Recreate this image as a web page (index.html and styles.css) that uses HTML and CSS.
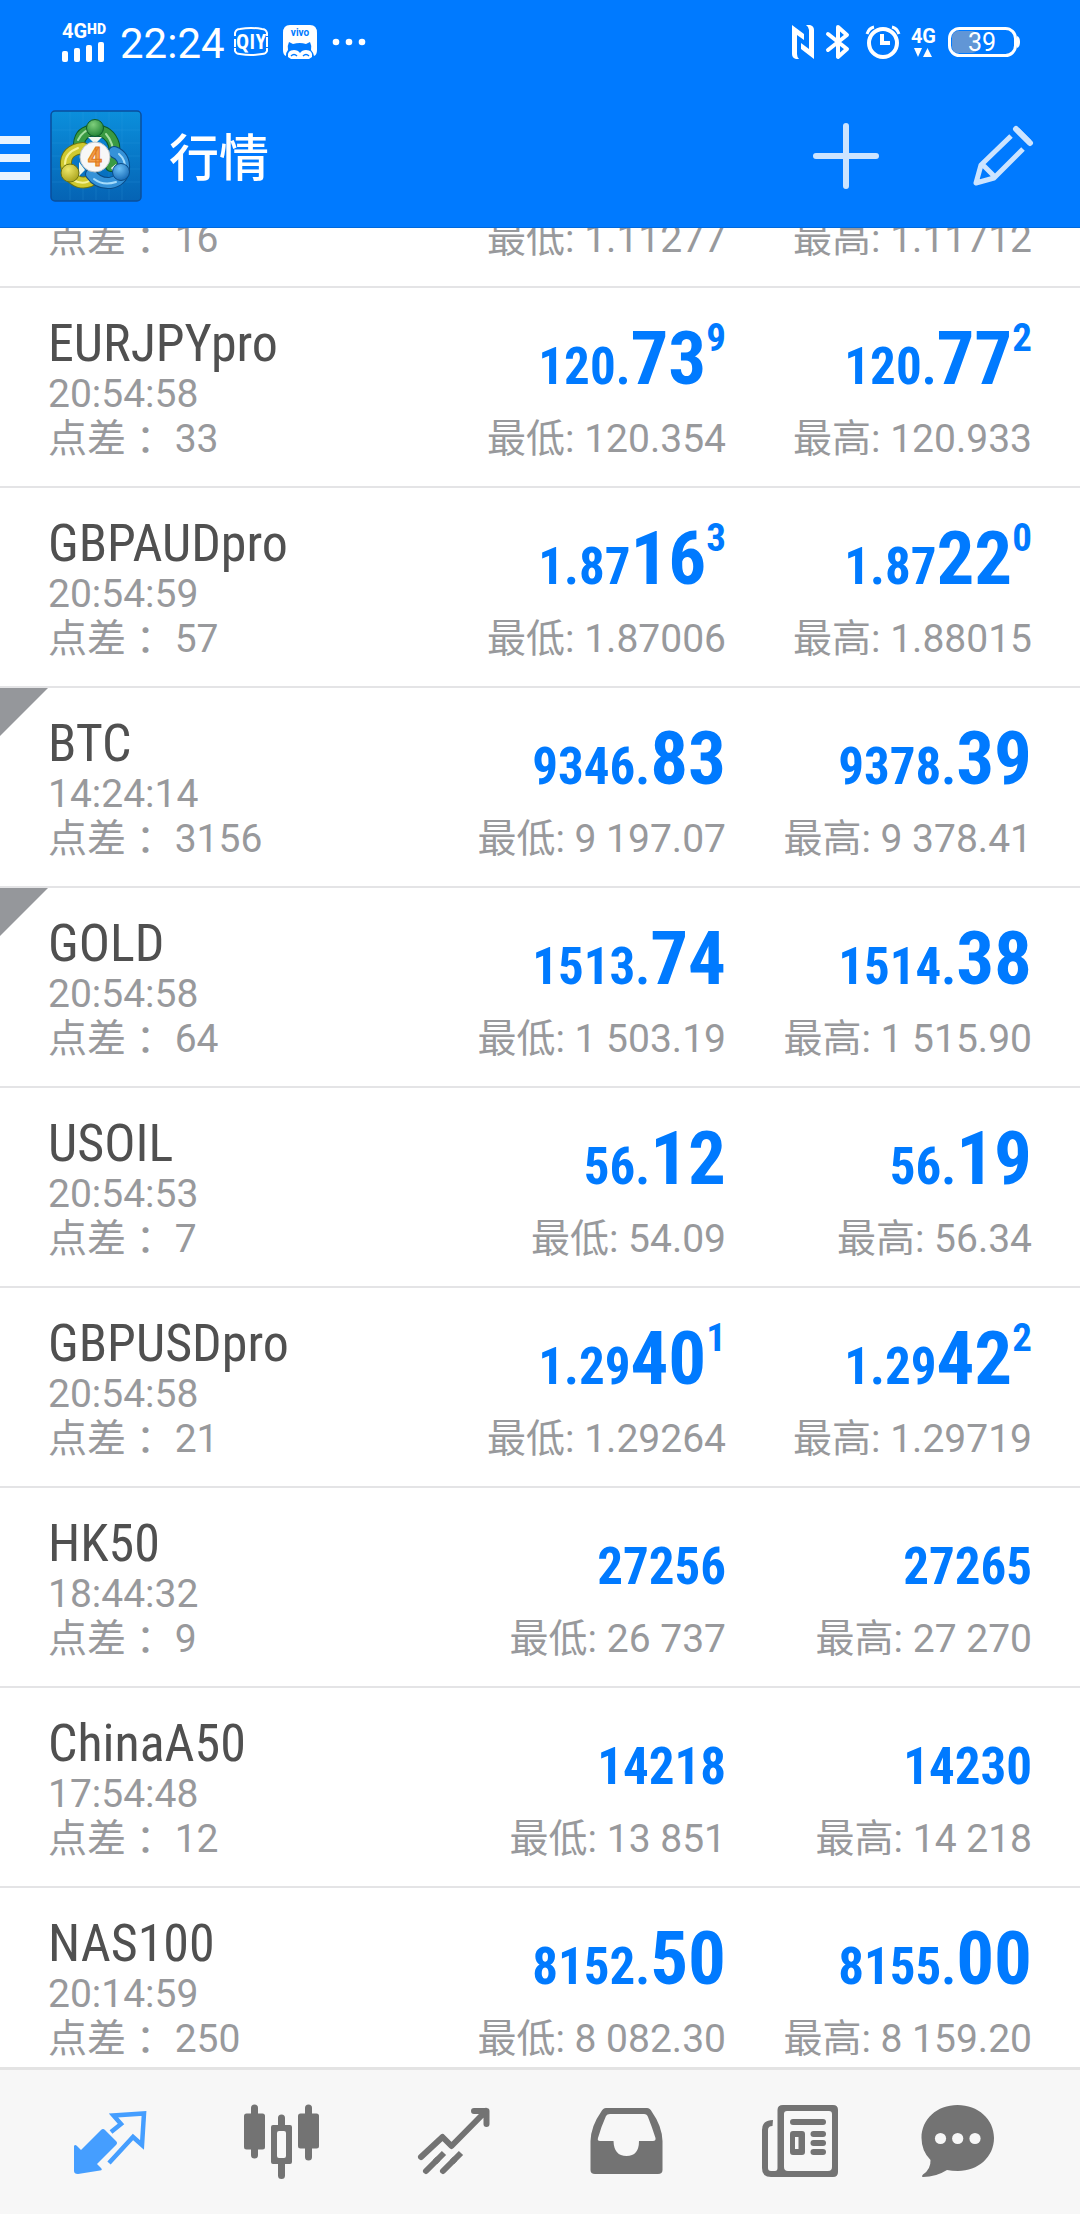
FILE: index.html
```html
<!DOCTYPE html>
<html lang="zh-CN">
<head>
<meta charset="utf-8">
<meta name="viewport" content="width=device-width, initial-scale=1">
<title>行情</title>
<link rel="stylesheet" href="styles.css">
</head>
<body>
<div class="app">
  <header class="header">
    <div class="status">
      <div class="signal">
        <span class="signal-label">4G<b class="hd">HD</b></span>
        <svg width="44" height="20" viewBox="0 0 44 20" fill="#fff" aria-hidden="true">
          <rect x="0" y="9" width="6" height="11" rx="2"/><rect x="12" y="6" width="6" height="14" rx="2"/><rect x="24" y="3" width="6" height="17" rx="2"/><rect x="36" y="0" width="6" height="20" rx="2"/>
        </svg>
      </div>
      <span class="clock">22:24</span>
      <svg class="app-note" width="34" height="30" viewBox="0 0 34 30" aria-hidden="true">
        <path d="M1 9V6Q2 2 6 2Q17 0 28 2Q32 2 33 6V9M1 21V24Q2 27 6 27Q17 29 28 27Q32 27 33 24V21M1 12V20M33 10V20" fill="none" stroke="#fff" stroke-width="2"/>
        <text x="17" y="22" text-anchor="middle" class="qiy">QIY</text>
      </svg>
      <svg class="app-note" width="34" height="34" viewBox="0 0 34 34" aria-hidden="true">
        <path d="M7 0H27Q34 0 34 8V25Q34 30 31 31Q30 27 28 25Q29 21 27 17L23 19Q17 17 10 19L6 17Q4 21 5 25Q3 27 3 31Q0 30 0 25V8Q0 0 7 0Z" fill="#fff"/>
        <path d="M5 32Q4 25 11 25Q15 25 17 28Q19 25 23 25Q30 25 29 32L26 34H8Z" fill="#fff"/>
        <path d="M8 31Q11 28 14 31M20 31Q23 28 26 31" fill="none" stroke="#007aff" stroke-width="1.4"/>
        <text x="17" y="11" text-anchor="middle" class="vivo">vivo</text>
      </svg>
      <svg class="dots" width="34" height="8" viewBox="0 0 34 8" fill="#fff" aria-hidden="true"><circle cx="4" cy="4" r="3.3"/><circle cx="17" cy="4" r="3.3"/><circle cx="30" cy="4" r="3.3"/></svg>
      <span class="spacer"></span>
      <svg class="nfc" width="22" height="34" viewBox="0 0 22 34" fill="#fff" aria-hidden="true">
        <path d="M0 0L12 9V15L5 10V29Q5 32 7 34H4Q0 33 0 29Z"/><path d="M22 34L9 24V18L17 24V5Q17 2 14 0H18Q22 1 22 5Z"/>
      </svg>
      <svg class="bt" width="24" height="36" viewBox="0 0 24 36" fill="none" stroke="#fff" stroke-width="4" stroke-linejoin="round" stroke-linecap="round" aria-hidden="true">
        <path d="M2 10L21 25L12 33V3L21 11L2 26"/>
      </svg>
      <svg class="alarm" width="36" height="34" viewBox="0 0 36 34" fill="none" stroke="#fff" stroke-width="4" aria-hidden="true">
        <circle cx="18" cy="18" r="14"/><path d="M17 9V18H25"/><path d="M2 9Q4 3 9 2M34 9Q32 3 27 2" stroke-width="3"/>
      </svg>
      <div class="data">
        <span class="data-label">4G</span>
        <svg width="18" height="9" viewBox="0 0 18 9" fill="#fff" aria-hidden="true"><path d="M0 0H8L4 9ZM9 9H18L13.500 0Z"/></svg>
      </div>
      <svg class="battery" width="74" height="30" viewBox="0 0 74 30" aria-hidden="true">
        <rect x="4" y="4" width="26" height="22" rx="6" fill="#6196d6"/>
        <rect x="1.500" y="1.500" width="66" height="27" rx="10" fill="none" stroke="#fff" stroke-width="3"/>
        <path d="M69 9Q72 10 72 15Q72 20 69 21Z" fill="#fff"/>
        <text x="34" y="24" text-anchor="middle" class="battery-text">39</text>
      </svg>
    </div>
    <div class="bar">
      <button class="menu" aria-label="菜单"><svg width="30" height="44" viewBox="0 0 30 44" fill="#e8f3ff"><path d="M0 0H30V8H0ZM0 18H30V26H0ZM0 36H30V44H0Z"/></svg></button>
      <svg class="logo" width="92" height="92" viewBox="0 0 92 92" aria-hidden="true">
        <defs>
          <linearGradient id="sky" x1="0" y1="0" x2="0" y2="1"><stop offset="0" stop-color="#0b8fdc"/><stop offset="1" stop-color="#0563b4"/></linearGradient>
          <radialGradient id="green" cx=".4" cy=".3" r=".8"><stop offset="0" stop-color="#7fce7c"/><stop offset="1" stop-color="#147a2b"/></radialGradient>
          <radialGradient id="gold" cx=".4" cy=".3" r=".8"><stop offset="0" stop-color="#eee86a"/><stop offset="1" stop-color="#a39b14"/></radialGradient>
          <radialGradient id="blue" cx=".4" cy=".3" r=".8"><stop offset="0" stop-color="#6dc0f5"/><stop offset="1" stop-color="#0d61b0"/></radialGradient>
        </defs>
        <rect x="1" y="1" width="90" height="90" rx="4" fill="url(#sky)" stroke="#0a4f9c" stroke-width="1.500"/>
        <path d="M20 2V90M33 2V90M46 2V90M59 2V90M72 2V90M2 20H90M2 33H90M2 46H90M2 59H90M2 72H90" stroke="#3aa5e8" stroke-width=".6" opacity=".35"/>
        <g fill="none" stroke-linecap="round">
          <path d="M29 34Q30 21 45 20Q60 21 64 35Q66 47 61 56" stroke="#0d5a28" stroke-width="12"/>
          <path d="M29 34Q30 21 45 20Q60 21 64 35Q66 47 61 56" stroke="#3a9a42" stroke-width="10"/>
          <path d="M28 30Q33 20 42 19M56 24Q64 33 63 46" stroke="#a4dfa1" stroke-width="2"/>
          <path d="M33 38Q15 40 16 55Q18 68 29 72Q38 74 45 68" stroke="#6c7310" stroke-width="12"/>
          <path d="M33 38Q15 40 16 55Q18 68 29 72Q38 74 45 68" stroke="#cfc92f" stroke-width="10"/>
          <path d="M28 38Q15 43 15 54M23 70Q34 76 42 69" stroke="#f5f193" stroke-width="2"/>
          <path d="M64 42Q75 46 74 60Q72 71 60 73Q48 74 41 64" stroke="#0a4b87" stroke-width="12"/>
          <path d="M64 42Q75 46 74 60Q72 71 60 73Q48 74 41 64" stroke="#3592d8" stroke-width="10"/>
          <path d="M69 44Q76 50 75 60M66 72Q53 76 44 69" stroke="#a5dcfb" stroke-width="2"/>
        </g>
        <path d="M38 27H52L45 34ZM29 52V66L35 60ZM61 58L66 54V66Z" fill="#eef7ee"/>
        <circle cx="45" cy="18" r="8.500" fill="url(#green)" stroke="#0d5a28"/>
        <circle cx="20" cy="63" r="9" fill="url(#gold)" stroke="#6c7310"/>
        <circle cx="71" cy="62" r="8.500" fill="url(#blue)" stroke="#0a4b87"/>
        <circle cx="45" cy="47" r="15" fill="#f7f7f7" stroke="#b9c4c9"/>
        <text x="45" y="56" text-anchor="middle" class="logo-text">4</text>
      </svg>
      <h1 class="title">行情</h1>
      <span class="spacer"></span>
      <button class="add" aria-label="添加"><svg width="66" height="66" viewBox="0 0 66 66" stroke="#cce4ff" stroke-width="6" stroke-linecap="round"><path d="M33 3V63M3 33H63"/></svg></button>
      <button class="edit" aria-label="编辑"><svg width="60" height="60" viewBox="0 0 60 60" fill="none" stroke="#cce4ff" stroke-width="5" stroke-linejoin="round"><path d="M38 10L8 39L3 57L21 52L50 23M9 38L22 51"/><path d="M43 3L57 17" stroke-width="6" stroke-linecap="round"/><path d="M46 2L58 14L55 18L41 4Z" fill="#cce4ff" stroke="none"/></svg></button>
    </div>
  </header>

  <main class="list">
    <section class="row row-partial">
      <div class="info"><span class="meta">点差 ：16</span></div>
      <div class="quote"><span class="meta">最低: 1.11277</span></div>
      <div class="quote"><span class="meta">最高: 1.11712</span></div>
    </section>
    <section class="row">
      <div class="info"><h2 class="name">EURJPYpro</h2><span class="meta">20:54:58</span><span class="meta">点差 ：33</span></div>
      <div class="quote"><span class="price"><span class="lead">120.</span>73<span class="pip">9</span></span><span class="meta">最低: 120.354</span></div>
      <div class="quote"><span class="price"><span class="lead">120.</span>77<span class="pip">2</span></span><span class="meta">最高: 120.933</span></div>
    </section>
    <section class="row">
      <div class="info"><h2 class="name">GBPAUDpro</h2><span class="meta">20:54:59</span><span class="meta">点差 ：57</span></div>
      <div class="quote"><span class="price"><span class="lead">1.87</span>16<span class="pip">3</span></span><span class="meta">最低: 1.87006</span></div>
      <div class="quote"><span class="price"><span class="lead">1.87</span>22<span class="pip">0</span></span><span class="meta">最高: 1.88015</span></div>
    </section>
    <section class="row flagged">
      <div class="info"><h2 class="name">BTC</h2><span class="meta">14:24:14</span><span class="meta">点差 ：3156</span></div>
      <div class="quote"><span class="price"><span class="lead">9346.</span>83</span><span class="meta">最低: 9 197.07</span></div>
      <div class="quote"><span class="price"><span class="lead">9378.</span>39</span><span class="meta">最高: 9 378.41</span></div>
    </section>
    <section class="row flagged">
      <div class="info"><h2 class="name">GOLD</h2><span class="meta">20:54:58</span><span class="meta">点差 ：64</span></div>
      <div class="quote"><span class="price"><span class="lead">1513.</span>74</span><span class="meta">最低: 1 503.19</span></div>
      <div class="quote"><span class="price"><span class="lead">1514.</span>38</span><span class="meta">最高: 1 515.90</span></div>
    </section>
    <section class="row">
      <div class="info"><h2 class="name">USOIL</h2><span class="meta">20:54:53</span><span class="meta">点差 ：7</span></div>
      <div class="quote"><span class="price"><span class="lead">56.</span>12</span><span class="meta">最低: 54.09</span></div>
      <div class="quote"><span class="price"><span class="lead">56.</span>19</span><span class="meta">最高: 56.34</span></div>
    </section>
    <section class="row">
      <div class="info"><h2 class="name">GBPUSDpro</h2><span class="meta">20:54:58</span><span class="meta">点差 ：21</span></div>
      <div class="quote"><span class="price"><span class="lead">1.29</span>40<span class="pip">1</span></span><span class="meta">最低: 1.29264</span></div>
      <div class="quote"><span class="price"><span class="lead">1.29</span>42<span class="pip">2</span></span><span class="meta">最高: 1.29719</span></div>
    </section>
    <section class="row">
      <div class="info"><h2 class="name">HK50</h2><span class="meta">18:44:32</span><span class="meta">点差 ：9</span></div>
      <div class="quote"><span class="price"><span class="lead">27256</span></span><span class="meta">最低: 26 737</span></div>
      <div class="quote"><span class="price"><span class="lead">27265</span></span><span class="meta">最高: 27 270</span></div>
    </section>
    <section class="row">
      <div class="info"><h2 class="name">ChinaA50</h2><span class="meta">17:54:48</span><span class="meta">点差 ：12</span></div>
      <div class="quote"><span class="price"><span class="lead">14218</span></span><span class="meta">最低: 13 851</span></div>
      <div class="quote"><span class="price"><span class="lead">14230</span></span><span class="meta">最高: 14 218</span></div>
    </section>
    <section class="row">
      <div class="info"><h2 class="name">NAS100</h2><span class="meta">20:14:59</span><span class="meta">点差 ：250</span></div>
      <div class="quote"><span class="price"><span class="lead">8152.</span>50</span><span class="meta">最低: 8 082.30</span></div>
      <div class="quote"><span class="price"><span class="lead">8155.</span>00</span><span class="meta">最高: 8 159.20</span></div>
    </section>
  </main>

  <nav class="tabs">
    <a class="tab active" href="#quotes" aria-label="行情"><svg viewBox="0 0 96 96" fill="currentColor">
      <path d="M12 52Q13 50 15 52L19 56L39 36Q41 34 43 36L54 47Q56 49 54 51L35 70L39 74Q41 76 38 76.500L16 80Q12 80 12 77Z"/>
      <path d="M49 38L59 30L51.500 21.500L82 19.500L80 51L71 43L47 69" fill="none" stroke="currentColor" stroke-width="4.500"/></svg></a>
    <a class="tab" href="#chart" aria-label="图表"><svg viewBox="0 0 96 96" fill="currentColor">
      <rect x="10" y="19.500" width="21" height="36" rx="2.500"/><rect x="17" y="10.500" width="7" height="54" rx="3.500"/>
      <rect x="64" y="19.500" width="21" height="35" rx="2.500"/><rect x="71" y="10.500" width="7" height="56" rx="3.500"/>
      <path d="M44 31V24Q44 20.500 47.500 20.500T51 24V31H56Q58 31 58 33V68Q58 70 56 70H51V81.500Q51 85 47.500 85T44 81.500V70H39Q37 70 37 68V33Q37 31 39 31ZM45 37Q43 37 43 39V62Q43 64 45 64H50Q52 64 52 62V39Q52 37 50 37Z" fill-rule="evenodd"/></svg></a>
    <a class="tab" href="#trade" aria-label="交易"><svg viewBox="0 0 96 96" fill="none" stroke="currentColor" stroke-width="6" stroke-linejoin="round">
      <path d="M15 63L36.500 43L45.500 52L80 17M68 17H80.500V30M20 77L31 66M37 77L48 66" stroke-linecap="round"/><path d="M29 68L38 59M46 68L55 59"/></svg></a>
    <a class="tab" href="#history" aria-label="历史"><svg viewBox="0 0 96 96" fill="currentColor">
      <path d="M28 14H69Q72 14 74 18Q84 32 84.500 47V76Q84.500 80 80 80H17Q12.500 80 12.500 76V47Q13 32 23 18Q25 14 28 14ZM32 20Q29 20 28 22Q23 33 20 44Q19 47 22 47H35.500Q36 62 48.500 62T61 47H75Q78 47 77.500 44Q74 33 70 23Q69 20 66 20Z" fill-rule="evenodd"/></svg></a>
    <a class="tab" href="#news" aria-label="新闻"><svg viewBox="0 0 96 96" fill="currentColor">
      <path d="M33 11H83Q88 11 88 16V78Q88 83 83 83H21Q12 83 12 74V36Q12 26 23 26L22.500 32Q18 32 18 36V74Q18 77 21 77H25Q27.500 77 27.500 74V16Q27.500 11 33 11ZM37 17Q34 17 34 20V73Q34 77 38 77H78Q82 77 82 73V20Q82 17 79 17Z" fill-rule="evenodd"/>
      <rect x="40" y="25" width="36" height="6" rx="3"/><path d="M43 37H52Q55 37 55 40V58Q55 61 52 61H43Q40 61 40 58V40Q40 37 43 37ZM45 43V55H48.500V43Z" fill-rule="evenodd"/>
      <rect x="60.500" y="37" width="15.500" height="6" rx="3"/><rect x="60.500" y="46" width="15.500" height="6" rx="3"/><rect x="60.500" y="55" width="15.500" height="6" rx="3"/></svg></a>
    <a class="tab" href="#chat" aria-label="聊天"><svg viewBox="0 0 96 96" fill="currentColor">
      <path d="M35.500 11C56 11 72 25 72 44S56 77 36 77Q30 77 25 76Q14 83 1 83Q-1 83 1 80.500Q9 75 8.500 66Q-0.500 57 -0.500 44C-0.500 25 15 11 35.500 11Z"/>
      <g fill="#f7f7f7"><circle cx="18.500" cy="44.500" r="5.600"/><circle cx="35.700" cy="44.500" r="5.600"/><circle cx="53" cy="44.500" r="5.600"/></g></svg></a>
  </nav>
</div>
</body>
</html>
```
FILE: styles.css
```css
* { box-sizing: border-box; }

body {
  margin: 0;
  background: #fff;
  font-family: Roboto, "Noto Sans CJK SC", sans-serif;
}

h1, h2 { margin: 0; font-weight: 400; }

button {
  display: flex;
  padding: 0;
  border: 0;
  background: none;
}

svg { display: block; overflow: visible; flex: none; }

.app {
  display: flex;
  flex-direction: column;
  height: 100vh;
}

.spacer { flex: 1; }

/* header */
.header {
  flex: none;
  background: #007aff;
  border-bottom: 1px solid #0069dc;
  color: #fff;
}

.status {
  display: flex;
  align-items: center;
  height: 84px;
  padding: 0 58px 0 60px;
}

.signal { display: flex; flex-direction: column; gap: 3px; padding-left: 2px; width: 60px; }
.signal-label {
  display: flex;
  font-size: 20px;
  font-weight: 700;
  line-height: 16px;
}
.hd { font-size: 14px; line-height: 12px; }
.clock { width: 114px; padding-top: 3px; font-size: 42px; line-height: 48px; }
.app-note { margin-right: 15px; }
.qiy { font: 700 22px "Open Sans Condensed", "Roboto Condensed", sans-serif; fill: #fff; }
.vivo { font: 700 10px Roboto, sans-serif; fill: #007aff; }
.nfc { margin-right: 12px; }
.bt { margin-right: 15px; }
.alarm { margin-right: 10px; }
.data {
  display: flex;
  flex-direction: column;
  align-items: center;
  gap: 4px;
  margin-right: 12px;
}
.data-label { font-size: 20px; font-weight: 700; line-height: 16px; }
.battery-text { font: 400 25px Roboto, sans-serif; fill: #fff; }

.bar {
  display: flex;
  align-items: center;
  height: 143px;
  padding: 0 47px 0 0;
}
.menu { padding-top: 4px; }
.logo { margin-left: 20px; }
.logo-text { font: 700 25px Roboto, sans-serif; fill: #f5a04a; stroke: #e07a1c; }
.title { margin-left: 27px; padding-top: 6px; font-size: 50px; font-weight: 500; line-height: 60px; }
.add { margin-right: 94px; }

/* quotes */
.list {
  flex: 1;
  min-height: 0;
  overflow: hidden;
}

.row {
  position: relative;
  display: flex;
  height: 200px;
  padding: 0 48px;
  border-bottom: 2px solid #e4e4e6;
}
.row-partial { height: 60px; align-items: flex-end; padding-bottom: 24px; }

.flagged::before {
  content: "";
  position: absolute;
  left: 0;
  top: 0;
  width: 48px;
  height: 48px;
  background: #95979b;
  clip-path: polygon(0 0, 100% 0, 0 100%);
}

.info { flex: 1; padding-top: 28px; }
.quote { width: 306px; text-align: right; }
.row-partial .info { padding-top: 0; }

.name {
  font-family: "Roboto Condensed", sans-serif;
  font-size: 52px;
  line-height: 56px;
  color: #505050;
}

.meta {
  display: block;
  font-size: 39px;
  line-height: 45px;
  color: #98999c;
  white-space: nowrap;
}

.price {
  display: block;
  padding: 25px 0 14px;
  font-family: "Roboto Condensed", sans-serif;
  font-size: 75px;
  font-weight: 700;
  line-height: 90px;
  color: #007aff;
}
.lead { font-size: 51px; line-height: 0; }
.pip { font-size: 39px; line-height: 0; vertical-align: 33px; }

/* bottom tabs */
.tabs {
  flex: none;
  display: flex;
  justify-content: space-around;
  align-items: center;
  height: 147px;
  padding: 0 24px;
  border-top: 3px solid #e3e3e3;
  background: #f7f7f7;
}
.tab { color: #737373; }
.tab svg { width: 96px; height: 96px; }
.active { color: #459eff; }
```
